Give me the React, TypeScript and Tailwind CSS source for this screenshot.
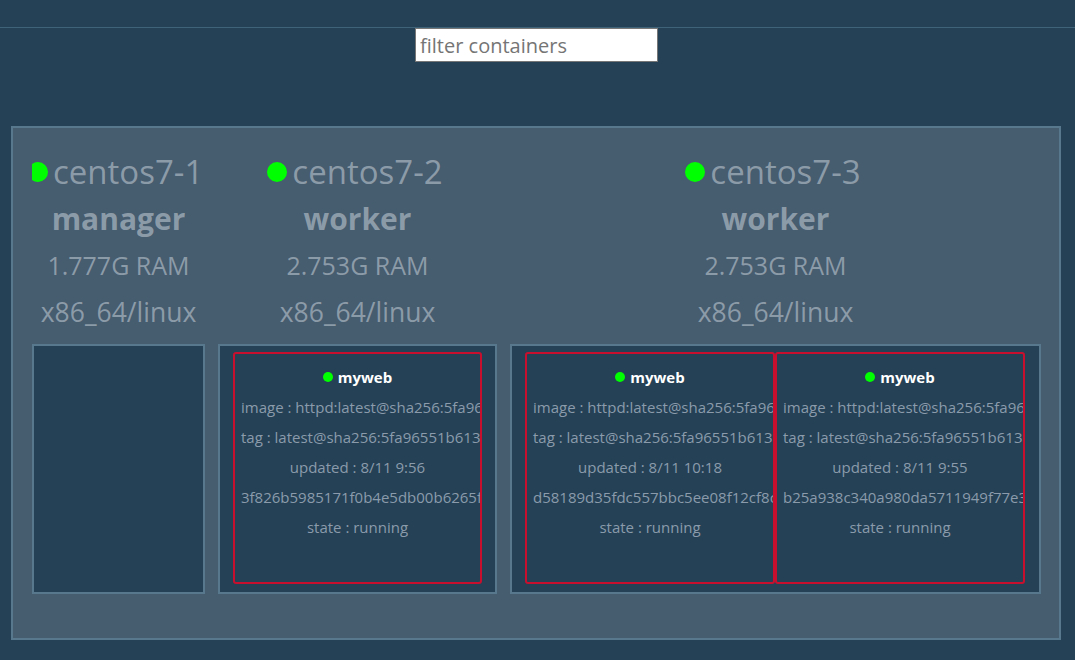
import React from 'react';

type Container = {
  name: string;
  image: string;
  tag: string;
  updated: string;
  id: string;
  state: string;
};

type Node = {
  name: string;
  role: string;
  ram: string;
  arch: string;
  width: string;
  clip?: boolean;
  containers: Container[];
};

const nodes: Node[] = [
  {
    name: 'centos7-1',
    role: 'manager',
    ram: '1.777G RAM',
    arch: 'x86_64/linux',
    width: 'w-[173px]',
    clip: true,
    containers: [],
  },
  {
    name: 'centos7-2',
    role: 'worker',
    ram: '2.753G RAM',
    arch: 'x86_64/linux',
    width: 'w-[279px]',
    containers: [
      {
        name: 'myweb',
        image: 'httpd:latest@sha256:5fa96551b61359de5dfb7fd8c9e97e4153232eb520a8e883e2f47fc80dbfc33e',
        tag: 'latest@sha256:5fa96551b61359de5dfb7fd8c9e97e4153232eb520a8e883e2f47fc80dbfc33e',
        updated: '8/11 9:56',
        id: '3f826b5985171f0b4e5db00b6265fa1e2d7c3b9a',
        state: 'running',
      },
    ],
  },
  {
    name: 'centos7-3',
    role: 'worker',
    ram: '2.753G RAM',
    arch: 'x86_64/linux',
    width: 'w-[531px]',
    containers: [
      {
        name: 'myweb',
        image: 'httpd:latest@sha256:5fa96551b61359de5dfb7fd8c9e97e4153232eb520a8e883e2f47fc80dbfc33e',
        tag: 'latest@sha256:5fa96551b61359de5dfb7fd8c9e97e4153232eb520a8e883e2f47fc80dbfc33e',
        updated: '8/11 10:18',
        id: 'd58189d35fdc557bbc5ee08f12cf8c0a4b1e2f3d',
        state: 'running',
      },
      {
        name: 'myweb',
        image: 'httpd:latest@sha256:5fa96551b61359de5dfb7fd8c9e97e4153232eb520a8e883e2f47fc80dbfc33e',
        tag: 'latest@sha256:5fa96551b61359de5dfb7fd8c9e97e4153232eb520a8e883e2f47fc80dbfc33e',
        updated: '8/11 9:55',
        id: 'b25a938c340a980da5711949f77e3c2d1a0b4e5f',
        state: 'running',
      },
    ],
  },
];

const ContainerCard = ({ c }: { c: Container }) => (
  <div className="w-[250px] h-[232px] border-2 border-[#c8102e] rounded-[3px] px-[6px] pt-[8px] overflow-hidden text-[15px] text-[#8b9bab] text-center whitespace-nowrap">
    <div className="h-[30px] flex items-center justify-center gap-[5px]">
      <span className="w-[10px] h-[10px] rounded-full bg-[#00ff00]" />
      <span className="font-bold text-white">{c.name}</span>
    </div>
    <div className="h-[30px] leading-[30px]">image : {c.image}</div>
    <div className="h-[30px] leading-[30px]">tag : {c.tag}</div>
    <div className="h-[30px] leading-[30px]">updated : {c.updated}</div>
    <div className="h-[30px] leading-[30px]">{c.id}</div>
    <div className="h-[30px] leading-[30px]">state : {c.state}</div>
  </div>
);

const NodeColumn = ({ node }: { node: Node }) => (
  <div className={`${node.width} shrink-0 flex flex-col ${node.clip ? 'overflow-hidden' : ''}`}>
    <div
      className={`h-[47px] flex items-center gap-[5px] whitespace-nowrap text-[33px] text-[#8c9ba8] ${
        node.clip ? 'justify-start -ml-[4px]' : 'justify-center pr-[5px]'
      }`}
    >
      <span className="w-[20px] h-[20px] shrink-0 rounded-full bg-[#00ff00]" />
      <span>{node.name}</span>
    </div>
    <div className="h-[47px] flex items-center justify-center text-[30px] font-bold text-[#8c9ba8]">
      {node.role}
    </div>
    <div className="h-[47px] flex items-center justify-center text-[25px] text-[#8c9ba8] whitespace-nowrap">
      {node.ram}
    </div>
    <div className="h-[47px] flex items-center justify-center text-[26.5px] text-[#8c9ba8] whitespace-nowrap">
      {node.arch}
    </div>
    <div className="mt-[8px] h-[250px] border-2 border-[#58788e] bg-[#244156] px-[13px] pt-[6px] flex">
      {node.containers.map((c, i) => (
        <ContainerCard key={i} c={c} />
      ))}
    </div>
  </div>
);

export default function App() {
  return (
    <div
      className="min-h-[660px] bg-[#244156]"
      style={{ fontFamily: '"Open Sans", "Noto Sans", sans-serif' }}
    >
      <div className="h-[28px] border-b border-[#3f6479]" />
      <div className="flex justify-center">
        <input
          type="text"
          placeholder="filter containers"
          className="w-[243px] h-[34px] -ml-[2px] bg-white border border-[#767676] px-[4px] text-[20px] text-[#333] placeholder:text-[#757575] outline-none"
        />
      </div>
      <div className="ml-[11px] mt-[64px] w-[1050px] h-[514px] border-2 border-[#58788e] bg-[#465c6f] px-[19px] pt-[20px] flex gap-[13px]">
        {nodes.map((n) => (
          <NodeColumn key={n.name} node={n} />
        ))}
      </div>
    </div>
  );
}
